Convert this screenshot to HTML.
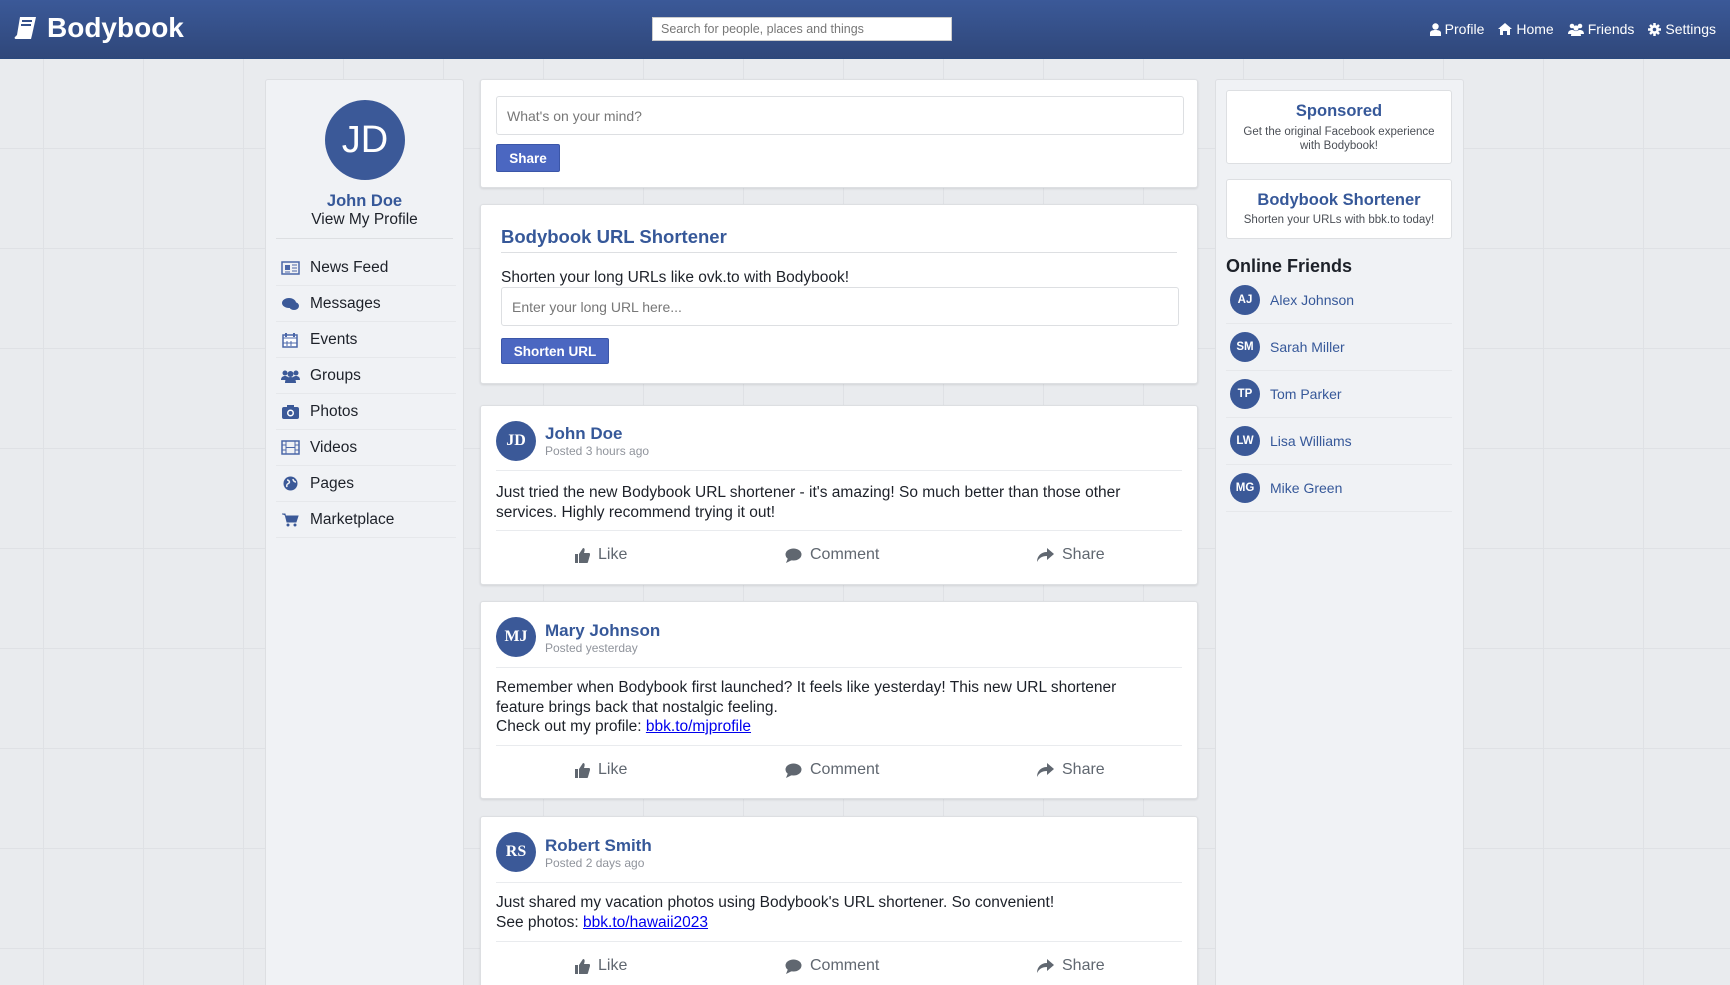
<!DOCTYPE html>
<html><head><meta charset="utf-8"><style>
*{box-sizing:border-box;margin:0;padding:0}
html{overflow:hidden;height:985px}
body{width:1730px;height:985px;overflow:hidden;font-family:"Liberation Sans",sans-serif;color:#1d2129;background-color:#e9ebee;background-image:linear-gradient(#dfe1e5 1px,transparent 1px),linear-gradient(90deg,#dfe1e5 1px,transparent 1px);background-size:100px 100px;background-position:43px 48px;position:relative}
.hdr{position:absolute;left:0;top:0;width:1730px;height:59px;background:linear-gradient(#3b5998,#2f477a);border-bottom:1px solid #29487d}
.logo{position:absolute;left:13px;top:12px;color:#fff;font-weight:bold;font-size:28px;display:flex;align-items:center;gap:8px}
.search{position:absolute;left:652px;top:17px;width:300px;height:24px;background:#fff;border:1px solid #ccc;font-size:12.5px;color:#777;padding:4px 8px}
.nav{position:absolute;right:14px;top:21px;color:#fff;font-size:14px;display:flex;gap:14px}
.nav span{display:flex;align-items:center;gap:4px}
.panel{position:absolute;background:#f0f2f5;border:1px solid #dddfe2;border-radius:3px}
.card{position:absolute;background:#fff;border:1px solid #dddfe2;border-radius:3px;box-shadow:0 1px 2px rgba(0,0,0,.1)}
.menu{position:absolute;left:10px;width:180px}
.mi{height:36px;display:flex;align-items:center;border-bottom:1px solid #e6e8eb;font-size:15.5px;color:#1d2129}
.mi svg{margin:0 10px 0 5px}
.input{position:absolute;border:1px solid #dddfe2;border-radius:3px;background:#fff;color:#777;font-size:14px;padding:0 10px;display:flex;align-items:center}
.btn{position:absolute;background:#4b67c1;border:1px solid #3b56a8;color:#fff;font-weight:bold;font-size:13.5px;display:flex;align-items:center;justify-content:center;border-radius:2px}
.av{position:absolute;border-radius:50%;background:#3b5998;color:#fff;display:flex;align-items:center;justify-content:center;font-family:"Liberation Serif",serif;font-weight:bold}
.pname{position:absolute;left:64px;font-weight:bold;font-size:17px;color:#365899}
.ptime{position:absolute;left:64px;font-size:12px;color:#90949c}
.line{position:absolute;left:15px;right:15px;height:1px;background:#e9ebee}
.ptext{position:absolute;left:15px;font-size:15.5px;line-height:19.5px;color:#1d2129}
.act{position:absolute;font-size:16px;color:#606770;display:flex;align-items:center;gap:8px}
a{color:#00e;text-decoration:underline}
.fr{height:47px;display:flex;align-items:center;border-bottom:1px solid #e6e8eb;font-size:14px;color:#365899}
.fav{width:30px;height:30px;border-radius:50%;background:#3b5998;color:#fff;font-size:11.5px;font-weight:bold;display:flex;align-items:center;justify-content:center;margin:0 10px 0 4px}
</style></head><body>
<div class="hdr">
 <div class="logo"><svg width="26" height="26" viewBox="0 0 26 26"><path d="M7 2h16l-4 18H4z" fill="#fff"/><path d="M4 20h15l-1 4H3c-1 0-2-1-1-2z" fill="#fff"/><path d="M9 6h10M8 10h10" stroke="#34508a" stroke-width="2"/></svg>Bodybook</div>
 <div class="search">Search for people, places and things</div>
 <div class="nav">
  <span><svg width="11" height="13" viewBox="0 0 11 13"><circle cx="5.5" cy="3.5" r="3.2" fill="#fff"/><path d="M0 13v-3c0-2 2-3 5.5-3S11 8 11 10v3z" fill="#fff"/></svg>Profile</span>
  <span><svg width="14" height="12" viewBox="0 0 14 12"><path d="M7 0l7 6h-2v6H9V8H5v4H2V6H0z" fill="#fff"/></svg>Home</span>
  <span><svg width="16" height="13" viewBox="0 0 16 13"><circle cx="4" cy="3" r="2.3" fill="#fff"/><circle cx="12" cy="3" r="2.3" fill="#fff"/><circle cx="8" cy="5" r="2.6" fill="#fff"/><path d="M0 11c0-3 2-4 4-4s4 1 4 4zM8 11c0-3 2-4 4-4s4 1 4 4zM3 13c0-3 2-5 5-5s5 2 5 5z" fill="#fff"/></svg>Friends</span>
  <span><svg width="13" height="13" viewBox="0 0 13 13"><circle cx="6.5" cy="6.5" r="4.5" fill="#fff"/><path d="M6.5 0v13M0 6.5h13M2 2l9 9M11 2l-9 9" stroke="#fff" stroke-width="2.5"/><circle cx="6.5" cy="6.5" r="1.8" fill="#34508a"/></svg>Settings</span>
 </div>
</div>

<div class="panel" style="left:265px;top:79px;width:199px;height:912px">
 <div class="av" style="left:59px;top:20px;width:80px;height:80px;font-family:'Liberation Sans',sans-serif;font-weight:normal;font-size:38px">JD</div>
 <div style="position:absolute;top:112px;width:100%;text-align:center;font-weight:bold;font-size:16.5px;color:#365899">John Doe</div>
 <div style="position:absolute;top:131px;width:100%;text-align:center;font-size:15.5px">View My Profile</div>
 <div style="position:absolute;left:10px;right:10px;top:158px;height:1px;background:#dddfe2"></div>
 <div class="menu" style="top:170px">
  <div class="mi"><svg width="19" height="14"><rect x="1" y="1" width="17" height="12" fill="none" stroke="#4b67a8" stroke-width="1.5"/><rect x="4" y="4" width="5" height="5" fill="#4b67a8"/><path d="M11 4h5M11 7h5M11 10h5M4 11h5" stroke="#4b67a8"/></svg>News Feed</div>
  <div class="mi"><svg width="19" height="14"><ellipse cx="8" cy="6" rx="7" ry="5" fill="#3b5998"/><ellipse cx="13" cy="9" rx="5" ry="4" fill="#3b5998"/></svg>Messages</div>
  <div class="mi"><svg width="19" height="16"><rect x="2" y="3" width="14" height="12" fill="#fff" stroke="#4b67a8" stroke-width="1.5"/><path d="M2 6h14M6 9v5M10 9v5M2 11h14" stroke="#4b67a8"/><path d="M5 1v4M13 1v4" stroke="#4b67a8" stroke-width="2"/></svg>Events</div>
  <div class="mi"><svg width="19" height="14"><circle cx="4" cy="4" r="2.5" fill="#3b5998"/><circle cx="15" cy="4" r="2.5" fill="#3b5998"/><circle cx="9.5" cy="5" r="3" fill="#3b5998"/><path d="M0 11c0-3 2-4 4-4s4 1 4 4zM11 11c0-3 2-4 4-4s4 1 4 4zM4 14c0-4 2-6 5.5-6s5.5 2 5.5 6z" fill="#3b5998"/></svg>Groups</div>
  <div class="mi"><svg width="19" height="15"><rect x="1" y="3" width="17" height="12" rx="2" fill="#3b5998"/><rect x="6" y="1" width="7" height="3" fill="#3b5998"/><circle cx="9.5" cy="9" r="3.5" fill="#fff"/><circle cx="9.5" cy="9" r="2" fill="#3b5998"/></svg>Photos</div>
  <div class="mi"><svg width="19" height="15"><rect x="1" y="1" width="17" height="13" fill="none" stroke="#4b67a8" stroke-width="1.5"/><path d="M5 1v13M14 1v13M1 5h4M1 10h4M14 5h4M14 10h4M5 7.5h9" stroke="#4b67a8"/></svg>Videos</div>
  <div class="mi"><svg width="19" height="15"><circle cx="9.5" cy="7.5" r="7" fill="#3b5998"/><path d="M6 4c2 0 3 2 2 3s-3 1-2 4M12 3c0 2 2 3 3 3" stroke="#f0f2f5" stroke-width="1.5" fill="none"/></svg>Pages</div>
  <div class="mi"><svg width="19" height="15"><path d="M1 2h3l2 8h9l2-6H5" fill="#3b5998" stroke="#3b5998"/><circle cx="7" cy="13" r="1.5" fill="#3b5998"/><circle cx="14" cy="13" r="1.5" fill="#3b5998"/></svg>Marketplace</div>
 </div>
</div>

<div class="card" style="left:480px;top:79px;width:718px;height:109px">
 <div class="input" style="left:15px;top:16px;width:688px;height:39px">What's on your mind?</div>
 <div class="btn" style="left:15px;top:64px;width:64px;height:28px">Share</div>
</div>

<div class="card" style="left:480px;top:204px;width:718px;height:180px">
 <div style="position:absolute;left:20px;top:21px;font-weight:bold;font-size:18.5px;color:#365899">Bodybook URL Shortener</div>
 <div style="position:absolute;left:20px;right:20px;top:47px;height:1px;background:#dddfe2"></div>
 <div style="position:absolute;left:20px;top:64px;font-size:15.5px">Shorten your long URLs like ovk.to with Bodybook!</div>
 <div class="input" style="left:20px;top:82px;width:678px;height:39px">Enter your long URL here...</div>
 <div class="btn" style="left:20px;top:133px;width:108px;height:26px">Shorten URL</div>
</div>

<div class="card" style="left:480px;top:405px;width:718px;height:180px">
 <div class="av" style="left:15px;top:15px;width:40px;height:40px;font-size:16px">JD</div>
 <div class="pname" style="top:18px">John Doe</div>
 <div class="ptime" style="top:38px">Posted 3 hours ago</div>
 <div class="line" style="top:64px"></div>
 <div class="ptext" style="top:77px">Just tried the new Bodybook URL shortener - it's amazing! So much better than those other<br>services. Highly recommend trying it out!</div>
 <div class="line" style="top:124px"></div>
 <div class="act" style="left:93px;top:140px"><svg width="16" height="15"><path d="M1 6h3v9H1zM5 6l4-6c2 0 2 2 1 5h5c1 0 1 1 1 2l-2 7c0 1-1 1-2 1H5z" fill="#606770"/></svg>Like</div>
 <div class="act" style="left:304px;top:140px"><svg width="17" height="15"><ellipse cx="8.5" cy="6.5" rx="8" ry="6" fill="#606770"/><path d="M3 10l-2 5 6-3z" fill="#606770"/></svg>Comment</div>
 <div class="act" style="left:556px;top:140px"><svg width="17" height="15"><path d="M10 0l7 6-7 6V8C5 8 2 10 0 14 0 8 4 4 10 4z" fill="#606770"/></svg>Share</div>
</div>

<div class="card" style="left:480px;top:601px;width:718px;height:198px">
 <div class="av" style="left:15px;top:15px;width:40px;height:40px;font-size:16px">MJ</div>
 <div class="pname" style="top:19px">Mary Johnson</div>
 <div class="ptime" style="top:39px">Posted yesterday</div>
 <div class="line" style="top:65px"></div>
 <div class="ptext" style="top:76px">Remember when Bodybook first launched? It feels like yesterday! This new URL shortener<br>feature brings back that nostalgic feeling.<br>Check out my profile: <a>bbk.to/mjprofile</a></div>
 <div class="line" style="top:143px"></div>
 <div class="act" style="left:93px;top:159px"><svg width="16" height="15"><path d="M1 6h3v9H1zM5 6l4-6c2 0 2 2 1 5h5c1 0 1 1 1 2l-2 7c0 1-1 1-2 1H5z" fill="#606770"/></svg>Like</div>
 <div class="act" style="left:304px;top:159px"><svg width="17" height="15"><ellipse cx="8.5" cy="6.5" rx="8" ry="6" fill="#606770"/><path d="M3 10l-2 5 6-3z" fill="#606770"/></svg>Comment</div>
 <div class="act" style="left:556px;top:159px"><svg width="17" height="15"><path d="M10 0l7 6-7 6V8C5 8 2 10 0 14 0 8 4 4 10 4z" fill="#606770"/></svg>Share</div>
</div>

<div class="card" style="left:480px;top:816px;width:718px;height:180px">
 <div class="av" style="left:15px;top:15px;width:40px;height:40px;font-size:16px">RS</div>
 <div class="pname" style="top:19px">Robert Smith</div>
 <div class="ptime" style="top:39px">Posted 2 days ago</div>
 <div class="line" style="top:65px"></div>
 <div class="ptext" style="top:76px">Just shared my vacation photos using Bodybook's URL shortener. So convenient!<br>See photos: <a>bbk.to/hawaii2023</a></div>
 <div class="line" style="top:124px"></div>
 <div class="act" style="left:93px;top:140px"><svg width="16" height="15"><path d="M1 6h3v9H1zM5 6l4-6c2 0 2 2 1 5h5c1 0 1 1 1 2l-2 7c0 1-1 1-2 1H5z" fill="#606770"/></svg>Like</div>
 <div class="act" style="left:304px;top:140px"><svg width="17" height="15"><ellipse cx="8.5" cy="6.5" rx="8" ry="6" fill="#606770"/><path d="M3 10l-2 5 6-3z" fill="#606770"/></svg>Comment</div>
 <div class="act" style="left:556px;top:140px"><svg width="17" height="15"><path d="M10 0l7 6-7 6V8C5 8 2 10 0 14 0 8 4 4 10 4z" fill="#606770"/></svg>Share</div>
</div>

<div class="panel" style="left:1215px;top:79px;width:249px;height:912px">
 <div class="card" style="left:10px;top:10px;width:226px;height:74px;box-shadow:none;text-align:center">
  <div style="margin-top:11px;font-weight:bold;font-size:16.5px;color:#365899">Sponsored</div>
  <div style="margin-top:4px;font-size:11.5px;line-height:14px;color:#4b4f56">Get the original Facebook experience<br>with Bodybook!</div>
 </div>
 <div class="card" style="left:10px;top:99px;width:226px;height:60px;box-shadow:none;text-align:center">
  <div style="margin-top:11px;font-weight:bold;font-size:16.5px;color:#365899">Bodybook Shortener</div>
  <div style="margin-top:4px;font-size:11.5px;color:#4b4f56">Shorten your URLs with bbk.to today!</div>
 </div>
 <div style="position:absolute;left:10px;top:176px;font-weight:bold;font-size:18px;color:#1d2129">Online Friends</div>
 <div style="position:absolute;left:10px;top:197px;width:226px">
  <div class="fr"><div class="fav">AJ</div>Alex Johnson</div>
  <div class="fr"><div class="fav">SM</div>Sarah Miller</div>
  <div class="fr"><div class="fav">TP</div>Tom Parker</div>
  <div class="fr"><div class="fav">LW</div>Lisa Williams</div>
  <div class="fr"><div class="fav">MG</div>Mike Green</div>
 </div>
</div>
</body></html>
